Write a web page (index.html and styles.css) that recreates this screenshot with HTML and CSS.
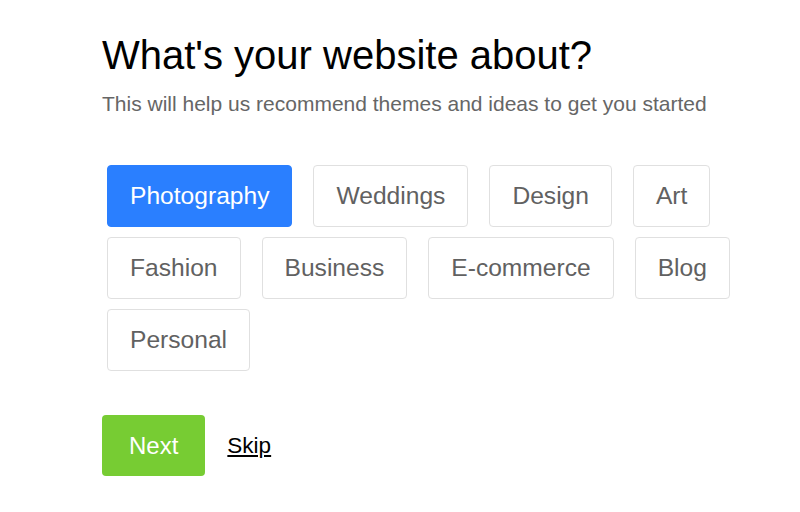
FILE: index.html
```html
<!DOCTYPE html>
<html>
<head>
<meta charset="utf-8">
<link rel="stylesheet" href="styles.css">
</head>
<body>
<main class="page">
  <h1 class="title">What's your website about?</h1>
  <p class="subtitle">This will help us recommend themes and ideas to get you started</p>
  <div class="chips">
    <button class="chip chip-active">Photography</button>
    <button class="chip">Weddings</button>
    <button class="chip">Design</button>
    <button class="chip">Art</button>
    <button class="chip">Fashion</button>
    <button class="chip">Business</button>
    <button class="chip">E-commerce</button>
    <button class="chip">Blog</button>
    <button class="chip">Personal</button>
  </div>
  <div class="actions">
    <button class="next">Next</button>
    <a class="skip" href="#">Skip</a>
  </div>
</main>
</body>
</html>
```
FILE: styles.css
```css
html, body {
  margin: 0;
  padding: 0;
  background: #ffffff;
}
body {
  font-family: "Liberation Sans", Arial, Helvetica, sans-serif;
}
.page {
  padding: 30px 0 0 102px;
  width: 660px;
}
.title {
  margin: 0;
  font-size: 40px;
  font-weight: normal;
  line-height: 50px;
  color: #000;
}
.subtitle {
  margin: 11px 0 0 0;
  font-size: 21px;
  line-height: 26px;
  color: #666;
}
.chips {
  display: flex;
  flex-wrap: wrap;
  column-gap: 21px;
  row-gap: 10px;
  padding-left: 5px;
  margin-top: 48px;
}
.chip {
  font-family: inherit;
  font-size: 24.6px;
  line-height: 36px;
  padding: 12px 22px;
  border: 1px solid #e0e0e0;
  border-radius: 4px;
  background: #fff;
  color: #616161;
  cursor: pointer;
}
.chip-active {
  background: #2a7fff;
  border-color: #2a7fff;
  color: #fff;
}
.actions {
  display: flex;
  align-items: center;
  gap: 22px;
  margin-top: 44px;
}
.next {
  font-family: inherit;
  font-size: 24px;
  line-height: 37px;
  padding: 12px 27px;
  border: none;
  border-radius: 4px;
  background: #77cc33;
  color: #fff;
}
.skip {
  font-size: 22.5px;
  color: #000;
  text-decoration: underline;
}
```
